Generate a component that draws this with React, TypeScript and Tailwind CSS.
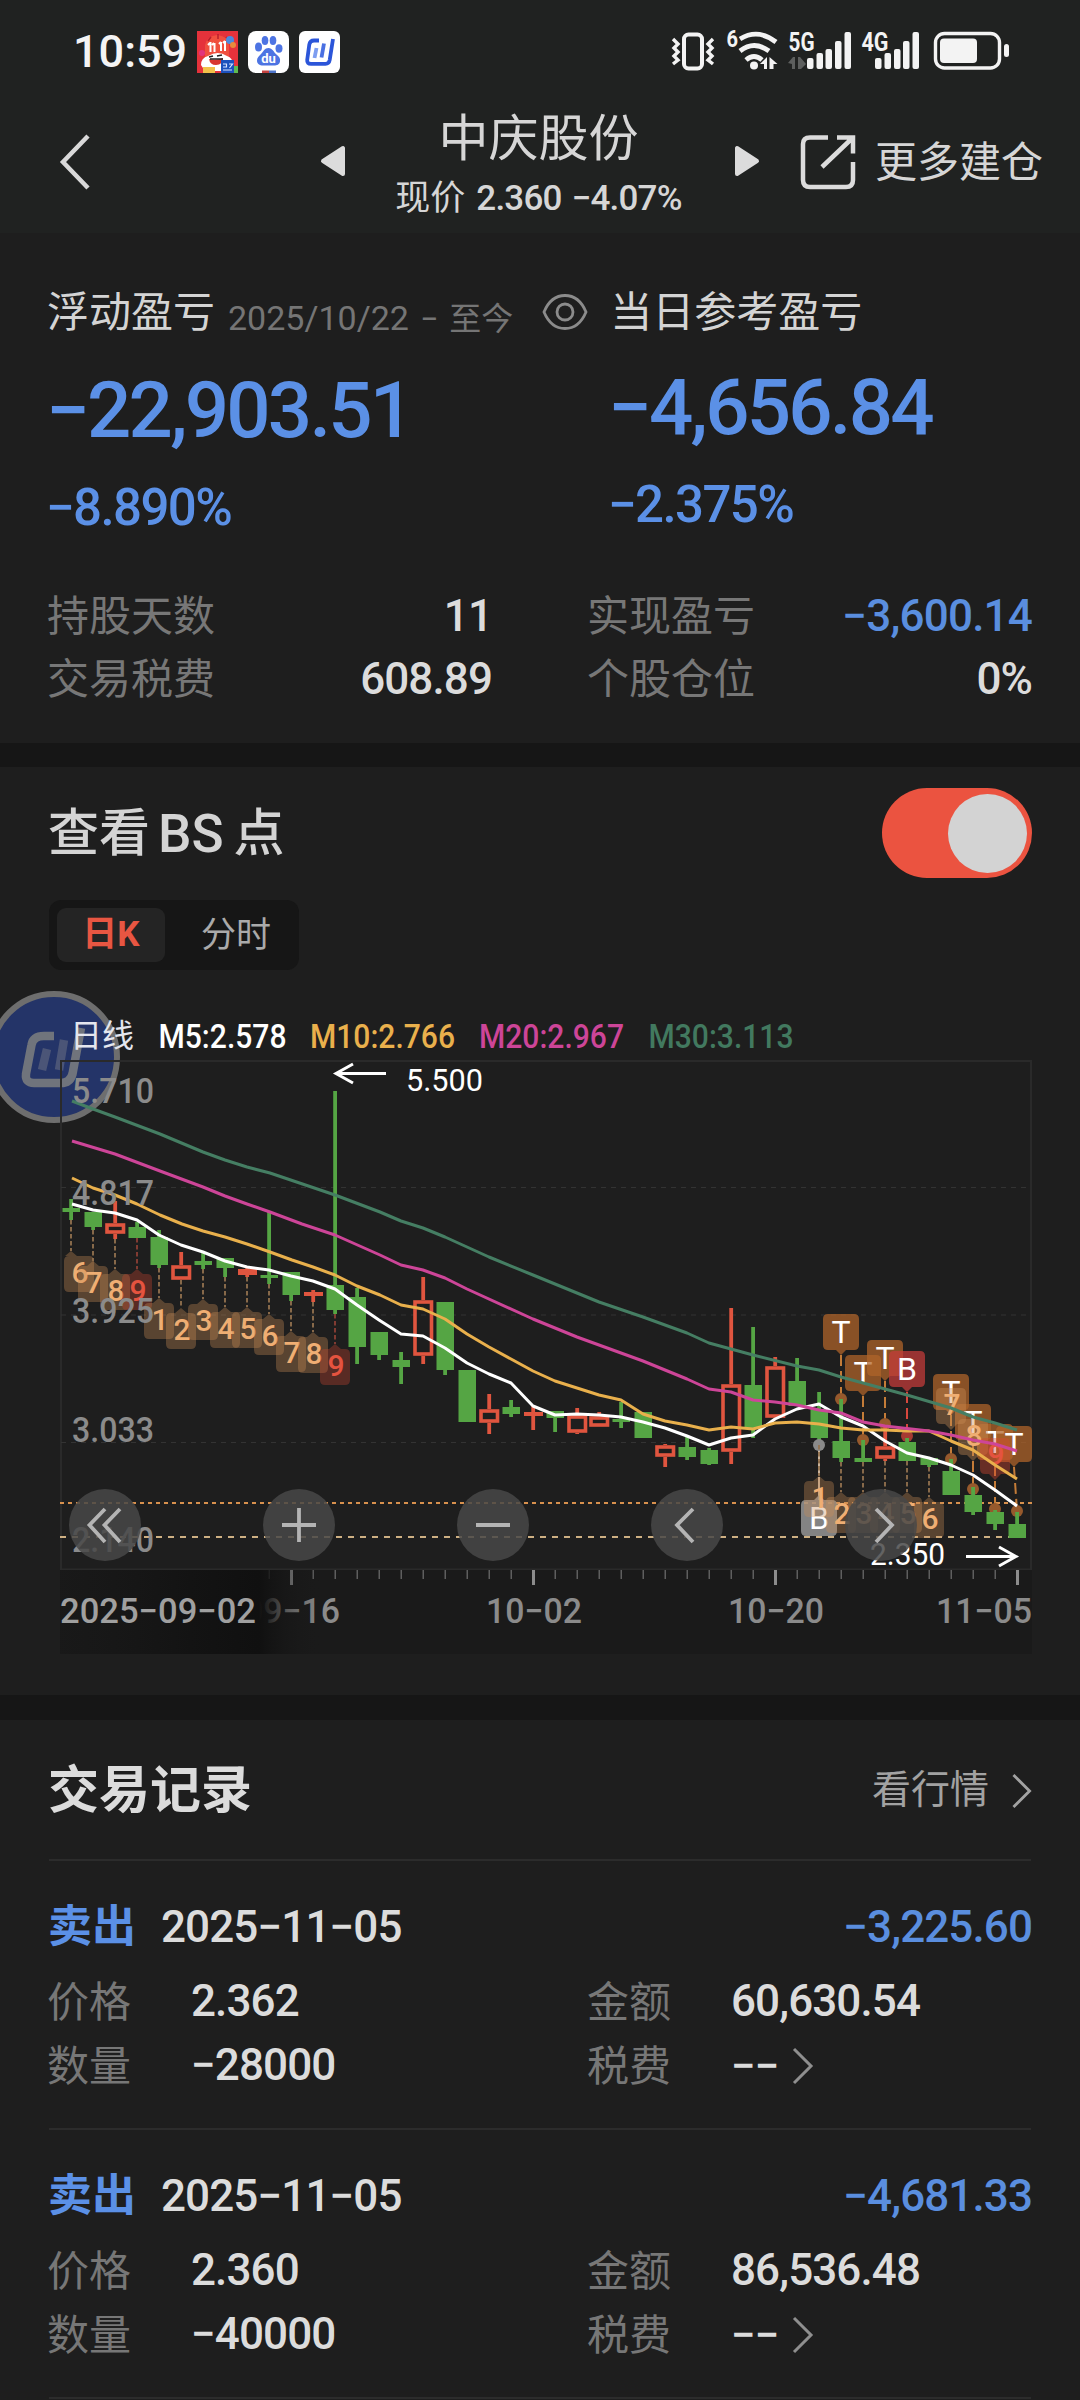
import React from "react";

const SANS = "font-[Roboto,'Noto_Sans_CJK_SC',sans-serif]";

/* ---------- status bar ---------- */

function StatusBar() {
  return (
    <div className="flex h-[104px] shrink-0 items-start justify-between pl-[73px] pr-[70px]">
      <div className="flex items-start">
        <span className="mt-[25px] w-[124px] text-[45px] font-medium leading-[54px] text-[#f4f4f4]">10:59</span>
        <svg className="mt-[31px] h-[42px] w-[41px]" viewBox="0 0 41 42">
          <rect width="41" height="42" fill="#e5323b" />
          <path d="M8 27V14Q10 5 20 4Q31 5 32 14V27Z" fill="#f0503f" />
          <path d="M21 3v5M14 6l-3 4M29 6l3 4" stroke="#b81f2c" strokeWidth="1.5" />
          <circle cx="33" cy="9" r="4" fill="#4b8ade" />
          <circle cx="36" cy="14" r="3" fill="#e88b3c" />
          <circle cx="5" cy="22" r="3" fill="#e2347e" />
          <path d="M13.500 11v10M17.500 12v9M24 11v9M28 10v10M11 14l2-2M15 14l2-2M22 13l2-2M26 12l2-2" stroke="#fff" strokeWidth="2" />
          <path d="M4 34q0-7 7-9q10-6 19 0q6 2 6 9l-4 6H8z" fill="#fff" />
          <path d="M12 28q7 2 14-1q0 7-7 7q-6 0-7-6z" fill="#d8362f" />
          <path d="M12 26l4-1M20 25l5-1M13 28h13" stroke="#222" strokeWidth="1.500" />
          <rect x="24" y="29" width="13" height="13" fill="#1c51bd" />
          <path d="M26 33h3.500v3H26M32 33h3.500l-3 4M26 39h9" stroke="#d6e2ff" strokeWidth="1.200" fill="none" />
          <rect x="6" y="36" width="12" height="6" fill="#f2c14a" />
          <rect x="37" y="35" width="4" height="7" fill="#5fbb52" />
        </svg>
        <svg className="ml-[10px] mt-[31px] h-[42px] w-[41px]" viewBox="0 0 41 42">
          <rect width="41" height="42" rx="8" fill="#fff" />
          <g fill="#4d74e3">
            <ellipse cx="10.500" cy="16" rx="3.500" ry="4.500" />
            <ellipse cx="17" cy="9.500" rx="3.300" ry="4.500" />
            <ellipse cx="25" cy="9.500" rx="3.300" ry="4.500" />
            <ellipse cx="31" cy="17.500" rx="3.500" ry="4.200" />
            <path d="M20.500 17c4 0 5 4 8 6.500c3 2.500 4 4 3.500 7c-.5 3-3 4-6 4H15c-3.500 0-6-1.500-6-5c0-3 2-4.500 4-6.500c2.500-2.500 3.500-6 7.500-6z" />
          </g>
          <text x="20.500" y="31.500" textAnchor="middle" fontSize="13" fontWeight="700" fill="#fff" fontFamily="Roboto">du</text>
          <path d="M14 39.500h7v2.500h-7z" fill="#c4423f" />
          <path d="M21 39.500h7v2.500h-7z" fill="#4d74c9" />
        </svg>
        <svg className="ml-[10px] mt-[31px] h-[42px] w-[41px]" viewBox="0 0 41 42">
          <rect width="41" height="42" rx="6" fill="#fff" />
          <path d="M20 9.500H15Q11 9.500 10.300 13.500L8.200 29Q7.800 32.800 12 32.800H26.500Q30 32.800 30.700 29L34 8" fill="none" stroke="#2b55d9" strokeWidth="3.800" />
          <path d="M17.500 17L15.500 27" fill="none" stroke="#7d9df0" strokeWidth="3.800" />
          <path d="M25 12.500L22.500 26.500" stroke="#4a70e2" strokeWidth="3.800" />
        </svg>
      </div>
      <svg className="mt-[26px] h-[50px] w-[340px]" viewBox="670 26 340 50" fontFamily="Roboto" fontWeight="700">
        <g fill="none" stroke="#f3f3f3">
          <rect x="684" y="34.500" width="18" height="34" rx="4.500" strokeWidth="4" />
          <path d="M673 39l5 5l-4 4l4 4l-4 4l4 4l-5 4M713 39l-5 5l4 4l-4 4l4 4l-4 4l5 4" strokeWidth="3.400" />
          <path d="M740 39Q758 28 776 42" strokeWidth="4.800" />
          <path d="M740 51Q754 40 769 51" strokeWidth="4.800" />
          <path d="M746 60Q754 53 762 60" strokeWidth="4.800" />
          <rect x="935.500" y="33.500" width="64" height="34.500" rx="9" strokeWidth="3.400" />
        </g>
        <g fill="#f3f3f3">
          <circle cx="754" cy="65.500" r="4" />
          <path d="M760 64l7-7v12h-3v-5zM769.500 57l8 7h-4v5h-4z" />
          <text x="726.500" y="47" fontSize="23" textLength="11.500" lengthAdjust="spacingAndGlyphs">6</text>
          <text x="788.500" y="51" fontSize="26" textLength="26" lengthAdjust="spacingAndGlyphs">5G</text>
          <text x="861.500" y="51" fontSize="26" textLength="27" lengthAdjust="spacingAndGlyphs">4G</text>
          <rect x="807" y="58" width="6.500" height="11" rx="2" />
          <rect x="816.500" y="53" width="6.500" height="16" rx="2" />
          <rect x="825.500" y="49" width="6.500" height="20" rx="2" />
          <rect x="835" y="41" width="6.500" height="28" rx="2" />
          <rect x="844.500" y="32" width="6.500" height="37" rx="2" />
          <rect x="875" y="58" width="6.500" height="11" rx="2" />
          <rect x="884.500" y="53" width="6.500" height="16" rx="2" />
          <rect x="894" y="49" width="6.500" height="20" rx="2" />
          <rect x="903" y="41" width="6.500" height="28" rx="2" />
          <rect x="912.500" y="32" width="6.500" height="37" rx="2" />
          <rect x="940" y="38.500" width="37" height="24.500" rx="4" />
          <rect x="1004" y="44" width="5" height="13" rx="2.500" />
        </g>
        <path d="M788 63l5-6h2v12h-3v-5zM798 57h2l6 7l-5 5h-3z" fill="#5d5f5e" />
      </svg>
    </div>
  );
}

/* ---------- header ---------- */

function Header() {
  return (
    <div className="flex h-[129px] shrink-0 items-start pl-[58px] pr-[34px]">
      <svg className="mt-[29px] h-[58px] w-[34px]" viewBox="0 0 34 58">
        <path d="M30 3L5 29L30 55" fill="none" stroke="#d9d9d9" strokeWidth="4.500" />
      </svg>
      <svg className="ml-[228px] mt-[41px] h-[32px] w-[26px]" viewBox="0 0 26 32">
        <path d="M3 16L23 3V29Z" fill="#dcdcdc" stroke="#dcdcdc" strokeWidth="4" strokeLinejoin="round" />
      </svg>
      <div className="ml-[20px] flex w-[345px] flex-col items-center">
        <h1 className="mt-[3px] text-[50px] leading-[64px] text-[#d6d6d6]">中庆股份</h1>
        <p className="mt-[6px] flex items-center whitespace-nowrap text-[35px] leading-[44px] text-[#d6d6d6]">
          现价<span className="ml-[11px] font-medium tracking-[-0.8px]">2.360</span>
          <span className="ml-[10px] font-medium tracking-[-0.8px]">−4.07%</span>
        </p>
      </div>
      <svg className="ml-[22px] mt-[41px] h-[32px] w-[28px]" viewBox="0 0 28 32">
        <path d="M24 16L4 3V29Z" fill="#dcdcdc" stroke="#dcdcdc" strokeWidth="4" strokeLinejoin="round" />
      </svg>
      <svg className="ml-[39px] mt-[30px] h-[56px] w-[56px]" viewBox="0 0 56 56">
        <path d="M28 3.500H10Q3 3.500 3 10V46Q3 53 10 53H46Q53 53 53 46V28" fill="none" stroke="#dcdcdc" strokeWidth="4.500" />
        <path d="M37 3.500H53V19.500M53 3.500L22 33" fill="none" stroke="#dcdcdc" strokeWidth="4.500" />
      </svg>
      <span className="ml-[19px] mt-[29px] whitespace-nowrap text-[42px] leading-[60px] text-[#d6d6d6]">更多建仓</span>
    </div>
  );
}

/* ---------- profit summary ---------- */

function Stat({ label, value, blue }: { label: string; value: string; blue?: boolean }) {
  return (
    <div className="flex h-[63px] items-center justify-between">
      <span className="-ml-[2px] pt-[2px] text-[42px] leading-[63px] text-[#777]">{label}</span>
      <span className={blue ? "-mr-[1px] text-[44px] font-medium tracking-[-0.8px] text-[#5a8edf]" : "-mr-[1px] text-[44px] font-medium tracking-[-0.9px] text-[#dcdcdc]"}>{value}</span>
    </div>
  );
}

function Summary() {
  return (
    <section className="flex h-[510px] shrink-0 flex-col px-[49px]">
      <div className="-ml-[2px] mt-[49px] flex h-[60px] items-center">
        <span className="text-[42px] text-[#d4d4d4]">浮动盈亏</span>
        <span className="ml-[13px] mt-[12px] whitespace-nowrap text-[32px] text-[#757575]">
          <span className="text-[34px]">2025/10/22</span>
          <span className="ml-[11px] mr-[11px]">−</span>至今
        </span>
        <svg className="ml-[29px] h-[40px] w-[46px]" viewBox="0 0 46 40">
          <path d="M2 20C7 8 14 3.500 23 3.500S39 8 44 20C39 32 32 36.500 23 36.500S7 32 2 20Z" fill="none" stroke="#8b8b8b" strokeWidth="2.800" />
          <circle cx="23" cy="20" r="8" fill="none" stroke="#8b8b8b" strokeWidth="2.800" />
        </svg>
        <span className="ml-[22px] text-[42px] text-[#d4d4d4]">当日参考盈亏</span>
      </div>
      <div className="-ml-[3px] mt-[23px] grid grid-cols-[562px_1fr] font-medium text-[#5b90e6]">
        <div>
          <p className="text-[78px] leading-[92px] tracking-[-2.8px]">−22,903.51</p>
          <p className="mt-[21px] text-[51px] leading-[60px] tracking-[-1.6px]">−8.890%</p>
        </div>
        <div className="-mt-[3px]">
          <p className="text-[78px] leading-[92px] tracking-[-2.8px]">−4,656.84</p>
          <p className="mt-[21px] text-[51px] leading-[60px] tracking-[-1.6px]">−2.375%</p>
        </div>
      </div>
      <div className="mt-[46px] grid grid-cols-[442px_442px] gap-x-[98px]">
        <Stat label="持股天数" value="11" />
        <Stat label="实现盈亏" value="−3,600.14" blue />
        <Stat label="交易税费" value="608.89" />
        <Stat label="个股仓位" value="0%" />
      </div>
    </section>
  );
}

/* ---------- chart ---------- */

const GREEN = "#55a544";
const RED = "#e0553f";
const cx = (i: number) => 71 + 22 * i;

/* kind, high, body top, body bottom, low */
const candles: [string, number, number, number, number][] = [
  ["g", 1199, 1208, 1212, 1220], ["g", 1212, 1212, 1227, 1230], ["r", 1201, 1223, 1234, 1239],
  ["g", 1222, 1227, 1238, 1238], ["g", 1230, 1237, 1265, 1268], ["r", 1252, 1265, 1280, 1280],
  ["g", 1253, 1261, 1265, 1269], ["g", 1258, 1258, 1268, 1277], ["r", 1267, 1269, 1275, 1277],
  ["g", 1212, 1275, 1278, 1284], ["g", 1272, 1272, 1295, 1301], ["r", 1290, 1292, 1296, 1302],
  ["g", 1091, 1285, 1310, 1314], ["g", 1288, 1297, 1347, 1364], ["g", 1332, 1332, 1355, 1360],
  ["g", 1352, 1360, 1367, 1384], ["r", 1277, 1300, 1356, 1364], ["g", 1302, 1302, 1370, 1375],
  ["g", 1370, 1370, 1422, 1422], ["r", 1394, 1409, 1423, 1434], ["g", 1400, 1407, 1414, 1417],
  ["r", 1405, 1412, 1416, 1430], ["g", 1411, 1411, 1418, 1432], ["r", 1408, 1415, 1433, 1434],
  ["r", 1412, 1416, 1427, 1427], ["g", 1402, 1419, 1422, 1428], ["g", 1412, 1412, 1438, 1438],
  ["r", 1444, 1445, 1457, 1467], ["g", 1437, 1447, 1457, 1460], ["g", 1448, 1450, 1464, 1465],
  ["r", 1308, 1384, 1452, 1464], ["g", 1327, 1385, 1429, 1438], ["r", 1357, 1366, 1418, 1418],
  ["g", 1358, 1381, 1406, 1406], ["g", 1392, 1409, 1438, 1445], ["g", 1399, 1441, 1458, 1462],
  ["g", 1440, 1458, 1462, 1462], ["r", 1425, 1446, 1459, 1461], ["g", 1438, 1442, 1461, 1461],
  ["g", 1458, 1458, 1465, 1467], ["g", 1459, 1471, 1495, 1495], ["g", 1487, 1495, 1512, 1515],
  ["g", 1510, 1512, 1524, 1530], ["g", 1512, 1524, 1538, 1538],
];

const ma30 = "72,1101 93,1109 115,1117 160,1134 203,1152 225,1160 247,1167 270,1173 335,1195 380,1212 401,1221 423,1228 445,1237 467,1247 489,1257 533,1275 599,1302 643,1317 687,1333 709,1343 731,1349 753,1355 797,1366 819,1370 841,1377 885,1389 907,1395 951,1408 973,1417 995,1423 1017,1430";
const ma20 = "72,1141 115,1154 160,1171 203,1187 225,1196 247,1204 270,1212 302,1224 335,1235 380,1255 401,1265 423,1270 445,1278 467,1289 533,1319 577,1337 643,1361 687,1379 709,1389 731,1392 753,1400 775,1402 797,1405 819,1410 841,1413 863,1422 885,1426 929,1431 951,1435 973,1440 995,1444 1017,1451";
const ma10 = "72,1178 93,1188 115,1195 137,1204 160,1215 182,1224 203,1231 225,1237 247,1244 270,1252 292,1260 313,1267 335,1275 357,1286 380,1295 401,1305 423,1309 445,1319 467,1334 489,1347 511,1359 533,1371 555,1381 577,1388 599,1395 621,1400 643,1414 665,1421 687,1425 709,1430 731,1427 753,1429 775,1423 797,1422 819,1424 841,1428 863,1430 885,1430 907,1431 929,1431 951,1441 973,1450 995,1465 1017,1479";
const ma5 = "72,1204 93,1210 115,1213 137,1220 159,1235 181,1245 203,1252 225,1261 247,1267 269,1270 291,1276 313,1281 335,1289 357,1305 379,1320 401,1334 423,1336 445,1348 467,1363 489,1374 511,1383 533,1406 555,1415 577,1414 599,1415 621,1417 643,1422 665,1428 687,1436 709,1445 731,1438 753,1435 775,1419 797,1409 819,1404 841,1417 863,1426 885,1441 907,1453 929,1458 951,1465 973,1475 995,1490 1017,1506";

/* candle index, digit, tip y, optional box centre */
const lowTags: [number, string, number, number?][] = [
  [0, "6", 1251, 79], [1, "7", 1261], [2, "8", 1269], [3, "9", 1269], [4, "1", 1298], [5, "2", 1308],
  [6, "3", 1299], [7, "4", 1307], [8, "5", 1307], [9, "6", 1314], [10, "7", 1331], [11, "8", 1332],
  [12, "9", 1344], [35, "2", 1492], [36, "3", 1492], [37, "4", 1492], [38, "5", 1492], [39, "6", 1497],
  [34, "1", 1476],
];

/* candle index, letter, box top, dot y, optional box centre */
const highTags: [number, string, number, number, number?][] = [
  [35, "T", 1314, 1399], [36, "T", 1355, 1440], [37, "T", 1340, 1424], [38, "B", 1351, 1436],
  [40, "T", 1374, 1459], [41, "T", 1404, 1489], [42, "T", 1424, 1509], [43, "T", 1426, 1511, 1014],
];

const countTags: [number, string, number][] = [[40, "7", 1388], [41, "8", 1419], [42, "9", 1438]];

function Candle({ i, c }: { i: number; c: [string, number, number, number, number] }) {
  const [kind, hi, top, bot, lo] = c;
  const x = cx(i);
  if (kind === "g") {
    return (
      <g fill={GREEN}>
        <rect x={x - 1.8} y={hi} width="3.800" height={lo - hi} />
        <rect x={x - 8.5} y={top} width="17.500" height={bot - top} />
      </g>
    );
  }
  const h = bot - top;
  return (
    <g fill={RED}>
      {hi < top && <rect x={x - 1.7} y={hi} width="3.800" height={top - hi} />}
      {lo > bot && <rect x={x - 1.7} y={bot} width="3.800" height={lo - bot} />}
      {h > 7 ? (
        <rect x={x - 8} y={top + 2} width="16.500" height={h - 4} fill="none" stroke={RED} strokeWidth="3.600" />
      ) : (
        <rect x={x - 9} y={top} width="19" height={h} />
      )}
    </g>
  );
}

function KLine() {
  return (
    <svg className="block h-[642px] w-[1080px] overflow-visible" viewBox="0 1012 1080 642" fontFamily="Roboto, 'Noto Sans CJK SC', sans-serif">
      <defs>
        <linearGradient id="axisShade" x1="0" x2="1" y1="0" y2="0">
          <stop offset="0" stopColor="#171717" stopOpacity="0.4" />
          <stop offset="0.500" stopColor="#131313" />
          <stop offset="0.760" stopColor="#101010" />
          <stop offset="0.800" stopColor="#121212" stopOpacity="0.800" />
          <stop offset="0.870" stopColor="#141414" stopOpacity="0.400" />
          <stop offset="1" stopColor="#1a1a1a" stopOpacity="0" />
        </linearGradient>
      </defs>

      <circle cx="54" cy="1057" r="63" fill="#243468" stroke="#6e6e6e" strokeWidth="6" />
      <g fill="none" stroke="#70747c" strokeWidth="8.500">
        <path d="M54 1036H44Q33 1036 31.500 1045L26 1074Q25 1083 34 1083H61Q70 1083 72.500 1074L81 1028" />
        <path d="M47 1049L42 1070M64 1040L59 1070" stroke="#4b5577" />
      </g>

      <g fontSize="33" fontWeight="500">
        <text x="70" y="1047" fontSize="32" fontWeight="400" textLength="64" fill="#e4e6ee">日线</text>
        <text x="158.500" y="1048" textLength="128" lengthAdjust="spacingAndGlyphs" fill="#fff">M5:2.578</text>
        <text x="310" y="1048" textLength="145" lengthAdjust="spacingAndGlyphs" fill="#e9b04c">M10:2.766</text>
        <text x="479" y="1048" textLength="145" lengthAdjust="spacingAndGlyphs" fill="#cd4598">M20:2.967</text>
        <text x="648.500" y="1048" textLength="145" lengthAdjust="spacingAndGlyphs" fill="#42795f">M30:3.113</text>
      </g>

      <rect x="61" y="1061" width="970" height="508.500" fill="none" stroke="#2a2a2a" strokeWidth="2" />
      <path d="M61 1187.500H1031M61 1315H1031M61 1442.500H1031" stroke="#333" strokeWidth="1.200" strokeDasharray="5 5" />
      <path d="M60 1503H1032" stroke="#d8914e" strokeWidth="2" strokeDasharray="4 4" />
      <path d="M60 1537H1032" stroke="#ceb083" strokeWidth="2" strokeDasharray="6 6" />

      {highTags.map(([i, t, top, dot, bx]) => {
        const x = cx(i);
        const b = bx ?? x;
        const red = t === "B";
        return (
          <g key={i}>
            <path d={`M${b} ${top + 41}L${x} ${dot}`} stroke={red ? "#d8473d" : "#c47c38"} strokeWidth="2" strokeDasharray="11 5" />
            <circle cx={x} cy={dot} r="6" fill={red ? "#a63a33" : "#96592c"} />
            <path
              d={`M${b} ${top + 41}L${b + 5} ${top + 36}H${b + 13}Q${b + 18} ${top + 36} ${b + 18} ${top + 31}V${top + 5}Q${b + 18} ${top} ${b + 13} ${top}H${b - 13}Q${b - 18} ${top} ${b - 18} ${top + 5}V${top + 31}Q${b - 18} ${top + 36} ${b - 13} ${top + 36}H${b - 5}Z`}
              fill={red ? "#c43c3a" : "#b0642a"}
              fillOpacity="0.740"
            />
            <text x={b} y={top + 28.5} fontSize="32" textAnchor="middle" fill="#fff">{t}</text>
          </g>
        );
      })}

      {candles.map((c, i) => <Candle key={i} i={i} c={c} />)}

      {countTags.map(([i, d, top]) => {
        const x = cx(i);
        const red = d === "9";
        return (
          <g key={i}>
            <path
              d={`M${x} ${top + 42}L${x + 6} ${top + 36}H${x + 10}Q${x + 15} ${top + 36} ${x + 15} ${top + 31}V${top + 5}Q${x + 15} ${top} ${x + 10} ${top}H${x - 10}Q${x - 15} ${top} ${x - 15} ${top + 5}V${top + 31}Q${x - 15} ${top + 36} ${x - 10} ${top + 36}H${x - 6}Z`}
              fill={red ? "#d8462f" : "#c88c55"}
              fillOpacity="0.400"
            />
            <text x={x + 1} y={top + 27} fontSize="30" fontWeight="500" textAnchor="middle" fill={red ? "#e5533f" : "#efae73"}>{d}</text>
          </g>
        );
      })}

      <g fill="none" strokeWidth="3" strokeLinejoin="round">
        <polyline points={ma30} stroke="#457e63" />
        <polyline points={ma5} stroke="#fff" />
        <polyline points={ma10} stroke="#e9b04c" />
        <polyline points={ma20} stroke="#cd4598" />
      </g>

      <path d="M819 1449V1500" stroke="#c9b39c" strokeWidth="2" strokeDasharray="12 2" />
      <circle cx="819" cy="1445" r="6" fill="#8a8a8a" />
      <path d="M819 1495L824 1500H832Q837 1500 837 1505V1531Q837 1536 832 1536H806Q801 1536 801 1531V1505Q801 1500 806 1500H814Z" fill="#9a9a9a" fillOpacity="0.820" />
      <text x="819" y="1529" fontSize="32" textAnchor="middle" fill="#fff">B</text>

      {lowTags.map(([i, d, tip, bx]) => {
        const x = cx(i);
        const b = bx ?? x;
        const red = d === "9";
        const y = tip + 5;
        return (
          <g key={i}>
            <path d={`M${x} ${candles[i][4]}V${tip}`} stroke={red ? "#8c3f35" : "#93724f"} strokeWidth="1.800" strokeDasharray="4.500 2.500" />
            <path
              d={`M${x} ${tip}L${x + 6} ${y}H${b + 10}Q${b + 15} ${y} ${b + 15} ${y + 5}V${y + 31}Q${b + 15} ${y + 36} ${b + 10} ${y + 36}H${b - 10}Q${b - 15} ${y + 36} ${b - 15} ${y + 31}V${y + 5}Q${b - 15} ${y} ${b - 10} ${y}H${x - 6}Z`}
              fill={red ? "#c84632" : "#c88c55"}
              fillOpacity="0.350"
            />
            <text x={b + 1} y={y + 27} fontSize="30" fontWeight="500" textAnchor="middle" fill={red ? "#e5533f" : "#efae73"}>{d}</text>
          </g>
        );
      })}

      <g fill="none" stroke="#fff" strokeWidth="3">
        <path d="M386 1073.500H336M353 1064L336 1073.500L353 1083" />
        <path d="M966 1556.500H1016M999 1547L1016 1556.500L999 1566" />
      </g>
      <text x="406" y="1091" fontSize="32" fill="#fff" textLength="77" lengthAdjust="spacingAndGlyphs">5.500</text>
      <text x="870" y="1565" fontSize="31" fill="#fff" textLength="75" lengthAdjust="spacingAndGlyphs">2.350</text>

      <g fontSize="35" fontWeight="500" fill="#8b8b8b">
        {([["5.710", 1103], ["4.817", 1205], ["3.925", 1323], ["3.033", 1442], ["2.140", 1552]] as [string, number][]).map(([t, y]) => (
          <text key={t} x="72" y={y} textLength="82" lengthAdjust="spacingAndGlyphs">{t}</text>
        ))}
      </g>

      {[105, 299, 493, 687, 881].map((x) => <circle key={x} cx={x} cy="1525" r="36" fill="#484848" fillOpacity="0.850" />)}
      <g fill="none" stroke="#b4b4b4" strokeWidth="3.800">
        <path d="M105 1509L89.500 1525L105 1542M120 1509L104.500 1525L120 1542" />
        <path d="M282 1525H316M299 1508V1542M476 1525H510" />
        <path d="M693 1509L677 1525L693 1542M876 1509L892 1525L876 1542" />
      </g>

      <rect x="60" y="1570" width="972" height="84" fill="#1a1a1a" />
      <g fill="#5e5e5e">
        {Array.from({ length: 35 }, (_, k) => k + 9).map((i) =>
          (i + 1) % 11 === 0 ? (
            <rect key={i} x={cx(i) - 1} y="1570" width="3" height="15" fill="#8c8c8c" />
          ) : (
            <rect key={i} x={cx(i) - 0.5} y="1570" width="1.500" height="9" />
          ),
        )}
      </g>
      <g fontSize="35" fontWeight="500" fill="#8b8b8b">
        <text x="244" y="1623" textLength="96" lengthAdjust="spacingAndGlyphs">09−16</text>
        <text x="486" y="1623" textLength="96" lengthAdjust="spacingAndGlyphs">10−02</text>
        <text x="728" y="1623" textLength="96" lengthAdjust="spacingAndGlyphs">10−20</text>
        <text x="936" y="1623" textLength="96" lengthAdjust="spacingAndGlyphs">11−05</text>
        <rect x="60" y="1570" width="262" height="84" fill="url(#axisShade)" />
        <text x="60" y="1623" fill="#a0a0a0" textLength="196" lengthAdjust="spacingAndGlyphs">2025−09−02</text>
      </g>
    </svg>
  );
}

function ChartSection() {
  return (
    <section className="flex h-[928px] shrink-0 flex-col">
      <div className="flex h-[133px] items-start justify-between pl-[48px] pr-[48px]">
        <h2 className="mt-[35px] flex items-center text-[51px] font-medium leading-[64px] text-[#d4d4d4]">
          查看<span className="ml-[8px] mr-[10px] text-[53px]">BS</span>点
        </h2>
        <div className="mt-[21px] flex h-[90px] w-[150px] items-center justify-end rounded-full bg-[#eb5340] pr-[5px]">
          <div className="size-[79px] rounded-full bg-[#d3d3d3]" />
        </div>
      </div>
      <div className="ml-[49px] flex h-[70px] w-[250px] items-center rounded-[12px] bg-[#161616] p-[8px] text-[35px]">
        <div className="flex h-[54px] w-[108px] items-center justify-center rounded-[9px] bg-[#242424] pt-[1px] font-bold text-[#e85642]">日K</div>
        <div className="flex-1 pl-[36px] pt-[2px] text-[#aaa]">分时</div>
      </div>
      <div className="mt-[42px]">
        <KLine />
      </div>
    </section>
  );
}

/* ---------- trade records ---------- */

function Chevron({ className, color }: { className: string; color: string }) {
  return (
    <svg className={className} viewBox="0 0 22 38">
      <path d="M2 2L19 19L2 36" fill="none" stroke={color} strokeWidth="3" />
    </svg>
  );
}

type Trade = { date: string; pnl: string; price: string; amount: string; qty: string };

function Label({ children }: { children: string }) {
  return <dt className="-ml-[2px] pt-[1px] text-[42px] font-normal tracking-normal text-[#777]">{children}</dt>;
}

function TradeCard({ t }: { t: Trade }) {
  return (
    <article className="flex h-[269px] shrink-0 flex-col border-t-2 border-[#2c2c2c] pt-[32px] text-[44px] font-medium leading-[63px] tracking-[-0.9px] text-[#dcdcdc]">
      <div className="flex h-[68px] items-center">
        <span className="-ml-[1px] w-[113px] text-[44px] font-bold tracking-normal text-[#5b90e6]">卖出</span>
        <span>{t.date}</span>
        <span className="-mr-[1px] ml-auto text-[#5a8edf]">{t.pnl}</span>
      </div>
      <dl className="mt-[9px] grid grid-cols-[142px_398px_142px_1fr]">
        <Label>价格</Label>
        <dd>{t.price}</dd>
        <Label>金额</Label>
        <dd>{t.amount}</dd>
        <Label>数量</Label>
        <dd>{t.qty}</dd>
        <Label>税费</Label>
        <dd className="flex items-center">
          −−
          <Chevron className="ml-[13px] h-[38px] w-[22px]" color="#8f8f8f" />
        </dd>
      </dl>
    </article>
  );
}

const trades: Trade[] = [
  { date: "2025−11−05", pnl: "−3,225.60", price: "2.362", amount: "60,630.54", qty: "−28000" },
  { date: "2025−11−05", pnl: "−4,681.33", price: "2.360", amount: "86,536.48", qty: "−40000" },
];

export default function App() {
  return (
    <main className={`flex h-[2400px] w-[1080px] flex-col overflow-hidden bg-[#1e1e1e] ${SANS}`}>
      <div className="shrink-0 bg-[#202221]">
        <StatusBar />
        <Header />
      </div>
      <Summary />
      <div className="h-[24px] shrink-0 bg-[#161616]" />
      <ChartSection />
      <div className="h-[25px] shrink-0 bg-[#161616]" />
      <section className="flex flex-col px-[49px]">
        <div className="flex h-[139px] shrink-0 items-center justify-between">
          <h2 className="-ml-[1px] mt-[4px] text-[51px] font-bold text-[#dcdcdc]">交易记录</h2>
          <div className="-mr-[2px] flex items-center pt-[2px] text-[39px] text-[#a2a2a2]">
            看行情
            <Chevron className="ml-[22px] h-[36px] w-[22px]" color="#a2a2a2" />
          </div>
        </div>
        {trades.map((t) => <TradeCard key={t.pnl} t={t} />)}
        <div className="h-[2px] bg-[#2c2c2c]" />
      </section>
    </main>
  );
}
